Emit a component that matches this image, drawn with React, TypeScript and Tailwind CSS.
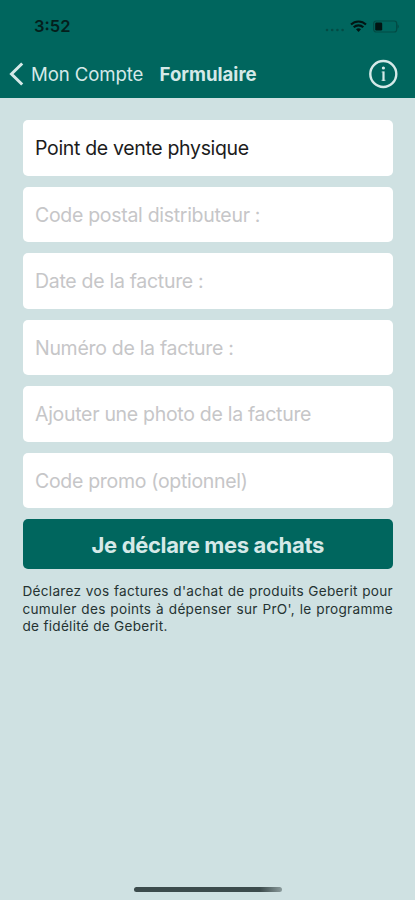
const fields = [
  'Code postal distributeur :',
  'Date de la facture :',
  'Numéro de la facture :',
  'Ajouter une photo de la facture',
  'Code promo (optionnel)',
];

function StatusBar() {
  return (
    <div className="flex h-[52px] items-center justify-between pl-[34px] pr-[15px] text-[#041f1c]">
      <span className="text-[16.5px] font-semibold leading-none">3:52</span>
      <div className="flex items-center">
        <svg width="20" height="4" viewBox="0 0 20 4" className="mt-2 mr-[5px]" fill="#034b44">
          <circle cx="2" cy="2" r="1.3" />
          <circle cx="7.2" cy="2" r="1.3" />
          <circle cx="12.4" cy="2" r="1.3" />
          <circle cx="17.6" cy="2" r="1.3" />
        </svg>
        <svg width="17" height="13" viewBox="0 0 17 13" fill="none" stroke="#021513" strokeWidth="2.1">
          <path d="M1 4.5C5.2 .4 11.8 .4 16 4.5" />
          <path d="M3.7 7.3c2.7-2.6 6.9-2.6 9.6 0" />
          <path d="M6 9.3c1.4-1.3 3.6-1.3 5 0L8.5 12z" fill="#021513" stroke="none" />
        </svg>
        <svg width="27" height="13" viewBox="0 0 27 13" className="ml-[6px]">
          <rect x=".7" y="1" width="23" height="11" rx="2.5" fill="none" stroke="#034b44" strokeWidth="1.2" />
          <rect x="2.2" y="2.6" width="7" height="7.8" rx="1.2" fill="#021513" />
          <path d="M24.5 4.3c1.8.7 1.8 3.7 0 4.4z" fill="#034b44" />
        </svg>
      </div>
    </div>
  );
}

function NavBar() {
  return (
    <div className="flex h-[44px] items-center pl-[9px] pr-[17px] text-[#d5e9e8]">
      <svg width="15" height="24" viewBox="0 0 15 24" fill="none" stroke="currentColor" strokeWidth="3" className="shrink-0">
        <path d="M13.2 1.5 2.5 12l10.7 10.5" />
      </svg>
      <span className="ml-[7px] w-[128.5px] whitespace-nowrap text-[18.6px] leading-none tracking-[-0.1px]">Mon Compte</span>
      <span className="whitespace-nowrap text-[18.6px] font-bold leading-none">Formulaire</span>
      <svg width="30" height="30" viewBox="0 0 30 30" className="ml-auto shrink-0">
        <circle cx="15.3" cy="15" r="13" fill="none" stroke="currentColor" strokeWidth="2.4" />
        <circle cx="15.4" cy="9" r="1.6" fill="currentColor" />
        <path d="M13.4 13h2M13.4 21.3h4.2" fill="none" stroke="currentColor" strokeWidth="1.2" opacity=".5" />
        <path d="M15.5 12.4V22" fill="none" stroke="currentColor" strokeWidth="2.2" />
      </svg>
    </div>
  );
}

export default function App() {
  return (
    <div className="flex h-[900px] w-[415px] flex-col overflow-hidden bg-[#cfe1e2] font-['Inter',sans-serif]">
      <header className="h-[97.5px] shrink-0 bg-[#00665e]">
        <StatusBar />
        <NavBar />
      </header>
      <main className="flex flex-col pl-[22.5px] pr-[22px] pt-[22.5px]">
        <div className="flex flex-col gap-[11px]">
          <div className="flex h-[55.5px] items-center rounded-[5px] bg-white pt-[2px] pl-[12.5px] text-[19.5px] tracking-[-0.33px] text-[#1c1c1c]">
            Point de vente physique
          </div>
          {fields.map((label) => (
            <div key={label} className="flex h-[55.5px] items-center whitespace-nowrap rounded-[5px] bg-white pt-[2px] pl-[12.5px] text-[19.5px] tracking-[-0.3px] text-[#c6c6c8]">
              {label}
            </div>
          ))}
          <button className="h-[50px] rounded-[5px] bg-[#00665e] pt-[2px] text-[22px] font-bold tracking-[-0.35px] text-[#d5e9e8]">
            Je déclare mes achats
          </button>
        </div>
        <div className="mt-[14px] text-[13.6px] leading-[17.5px] tracking-[0.28px] text-[#253332]">
          <p className="whitespace-nowrap [text-align-last:justify]">Déclarez vos factures d'achat de produits Geberit pour</p>
          <p className="whitespace-nowrap [text-align-last:justify]">cumuler des points à dépenser sur PrO', le programme</p>
          <p className="whitespace-nowrap">de fidélité de Geberit.</p>
        </div>
      </main>
      <div className="mt-auto mb-[8.5px] ml-[134px] h-[5px] w-[148px] rounded-full bg-linear-to-r from-[#3c4b4c] from-85% to-[#8b9b9c]" />
    </div>
  );
}
